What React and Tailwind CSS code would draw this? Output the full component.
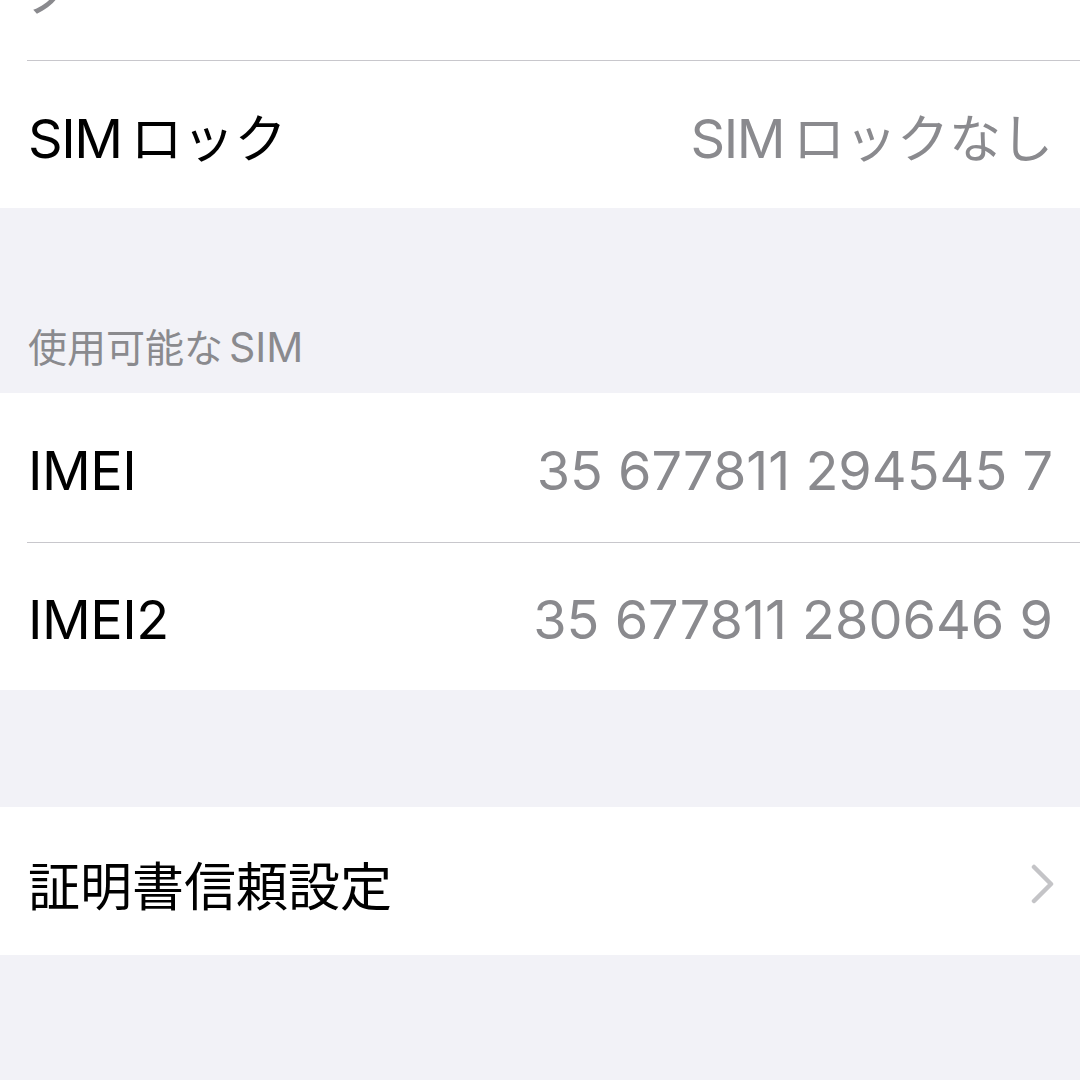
function En({ children, className = "" }) {
  return (
    <span className={`font-['Inter',sans-serif] text-[54px] leading-none ${className}`}>
      {children}
    </span>
  );
}

function Jp({ children, className = "" }) {
  return (
    <span className={`font-['Noto_Sans_CJK_JP',sans-serif] text-[52px] leading-none ${className}`}>
      {children}
    </span>
  );
}

function Row({ left, right, chevron, className = "" }) {
  return (
    <div className={`flex items-center justify-between pl-[28px] pr-[27px] pt-[6px] ${className}`}>
      <div className="flex items-baseline text-black">{left}</div>
      {right && <div className="flex items-baseline text-[#8a8a8e]">{right}</div>}
      {chevron && (
        <svg width="24" height="40" viewBox="0 0 24 40" className="mr-[-1px]">
          <polyline
            points="4,3 21,20 4,37"
            fill="none"
            stroke="#c4c4c7"
            strokeWidth="4.5"
            strokeLinecap="round"
            strokeLinejoin="round"
          />
        </svg>
      )}
    </div>
  );
}

function Sep() {
  return <div className="ml-[27px] h-px bg-[#c8c7cc]" />;
}

export default function App() {
  return (
    <div className="min-h-[1080px] w-full overflow-hidden bg-[#f2f2f7]">
      {/* top group, scrolled partly out of view */}
      <div className="bg-white">
        <div className="h-[60px] overflow-hidden pl-[26px]">
          <div className="mt-[-35px]">
            <Jp className="text-[#8a8a8e]">ノ</Jp>
          </div>
        </div>
        <Sep />
        <Row
          className="h-[147px]"
          left={
            <>
              <En className="mr-[9px] tracking-[-1.5px]">SIM</En>
              <Jp>ロック</Jp>
            </>
          }
          right={
            <>
              <En className="mr-[9px] tracking-[-1.5px]">SIM</En>
              <Jp>ロックなし</Jp>
            </>
          }
        />
      </div>

      <div className="flex h-[185px] items-end pb-[22px] pl-[28px]">
        <div className="flex items-baseline text-[#8a8a8e]">
          <span className="font-['Noto_Sans_CJK_JP',sans-serif] text-[39px] leading-[48px]">
            使用可能な
          </span>
          <span className="ml-[6px] font-['Inter',sans-serif] text-[41px] leading-[48px]">
            SIM
          </span>
        </div>
      </div>

      <div className="bg-white">
        <Row
          className="h-[149px]"
          left={<En className="tracking-[-0.5px]">IMEI</En>}
          right={<En>35 677811 294545 7</En>}
        />
        <Sep />
        <Row
          className="h-[147px]"
          left={<En className="tracking-[-0.5px]">IMEI2</En>}
          right={<En>35 677811 280646 9</En>}
        />
      </div>

      <div className="h-[117px]" />

      <div className="bg-white">
        <Row
          className="h-[148px]"
          left={<Jp>証明書信頼設定</Jp>}
          chevron
        />
      </div>
    </div>
  );
}
